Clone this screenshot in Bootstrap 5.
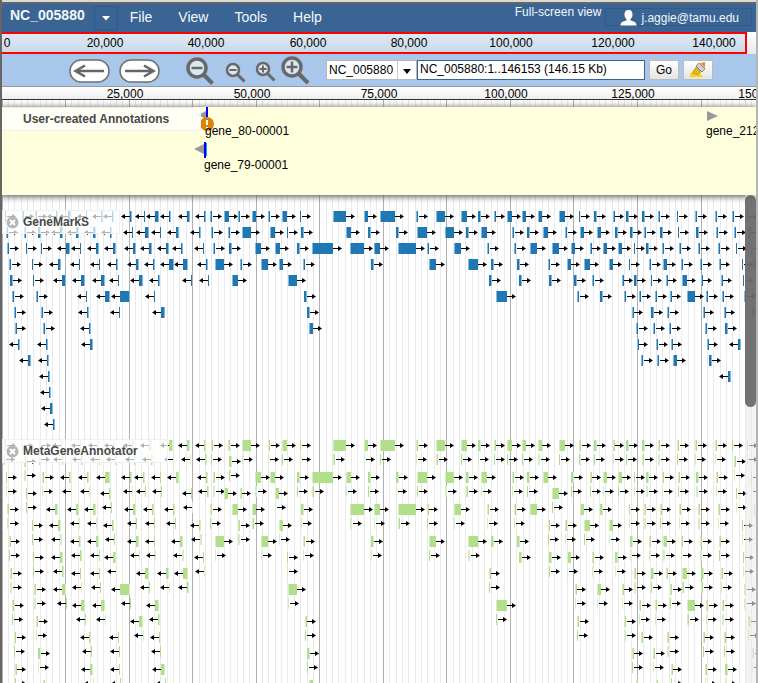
<!DOCTYPE html>
<html lang="en">
<head>
<meta charset="utf-8">
<meta name="viewport" content="width=device-width, initial-scale=1">
<title>NC_005880 genome browser</title>
<link rel="stylesheet" href="https://cdn.jsdelivr.net/npm/bootstrap@5.3.0/dist/css/bootstrap.min.css">
<style>
body{font-family:"Liberation Sans",Arial,sans-serif;font-size:12px;line-height:16px;color:#000;background:#fff}
.app{border-left:2px solid #666;border-right:2px solid #b4b4b4}
.topline{height:4px;background:linear-gradient(#d5dbd9 0 2px,#666 2px 4px)}
.menubar{height:28px;background:#396494;color:#fff}
.menubar .btn{border-radius:0;font-size:14px;line-height:18px;color:#f4f8fc;padding:4px 0;border:0}
.menubar .dataset{font-weight:bold;padding:2px 8px 4px}
.menubar .caret{width:24px;height:24px;border:1px solid #33598a;margin:2px 12px 0 1px}
.menus{gap:26px}
.fullscreen{color:#f4f8fc;text-decoration:none;line-height:16px}
.menubar .user{font-size:12px;line-height:16px;padding:1px 12px 0 14px;border:1px solid #33598a;height:18px}
.overview{height:22px;background:linear-gradient(#fff,#e8e8e8)}
.window{height:22px;border:2px solid #f00;border-left:0;background:linear-gradient(#dfeaf5,#cbd9e8);margin-right:9px}
.toolbar{height:32px;background:#a9c6eb;padding-left:67px}
.toolbar .ico{padding:0;border:0;background:none;display:block;line-height:0}
.toolbar .field{height:20px;font-size:12px;line-height:16px;border:1px solid #b8b8b8;border-radius:0;background:#fff;color:#000}
.combo{margin-left:13px}
.combo select{width:91px;padding:0 2px;appearance:none;background:#fff}
.combo svg{position:absolute;right:0;top:0;pointer-events:none}
.toolbar input.field{width:228px;border-color:#396494;padding:0 2px 3px}
.toolbar .tool{height:20px;width:30px;border:1px solid #bbb;border-radius:0;background:linear-gradient(#fff,#e4e4e4);padding:0;font-size:12px;line-height:16px;color:#000}
.scale{height:14px;background:linear-gradient(#fff,#eee);border-top:1px solid #999;border-bottom:1px solid #333}
.pinned{margin-top:7px;height:88px;background:#ffffdd;box-shadow:0 1px 6px 1px #666}
.tlabel{position:absolute;left:0;font-weight:bold;color:#484848;background:rgba(255,255,255,.7);border:1px solid #f0f0f0;border-left:0;height:24px;padding:0 4px;line-height:16px}
.tlabel.own{top:0;width:199px;padding-left:21px}
.tlabel.marks{top:15px;width:118px}
.tlabel.meta{top:14px;width:166px}
.tracks svg,.pinned>svg,.scale svg,.window svg{display:block;overflow:visible}
.track{position:relative}
.scroller{position:absolute;top:95px;right:0;width:11px;bottom:0;background:rgba(235,235,235,.6)}
.thumb{height:212px;border-radius:6px;background:rgba(94,94,94,.87)}
</style>
<script src="https://cdn.jsdelivr.net/npm/bootstrap@5.3.0/dist/js/bootstrap.bundle.min.js"></script>
</head>
<body>
<div class="app vh-100 d-flex flex-column overflow-hidden">
  <div class="topline flex-shrink-0"></div>
  <nav class="menubar d-flex align-items-start flex-shrink-0" aria-label="Main">
    <button class="btn dataset">NC_005880</button>
    <button class="btn caret p-0 d-flex align-items-center justify-content-center" aria-label="Choose dataset"><svg width="8" height="5"><path d="M0 0h8L4 4.5z" fill="#fff"/></svg></button>
    <div class="menus d-flex">
      <button class="btn">File</button><button class="btn">View</button><button class="btn">Tools</button><button class="btn">Help</button>
    </div>
    <a class="fullscreen ms-auto me-1" href="#">Full-screen view</a>
    <button class="btn user d-flex align-items-center mt-1 me-1"><svg width="17" height="16" class="me-1"><path d="M8.500 0c-3 0-4 2-4 4.500 0 2 .7 3.500 2 4.500v1.500C3 11.500.5 12 .5 15.500h16c0-3.500-2.500-4-6-5V9c1.300-1 2-2.500 2-4.500C12.500 2 11.500 0 8.500 0z" fill="#fff"/></svg>j.aggie@tamu.edu</button>
  </nav>
  <div class="overview flex-shrink-0"><div class="window"><svg id="overview" width="100%" height="18"></svg></div></div>
  <div class="toolbar d-flex align-items-center flex-shrink-0">
    <button class="ico me-2" aria-label="Pan left"><svg width="42" height="26"><rect x="1" y="3" width="39" height="22" rx="11" fill="#fff" stroke="#707070" stroke-width="1.500"/><path d="M35 14H7M16 8.500L6.500 14L16 19.500" fill="none" stroke="#666" stroke-width="2.500"/></svg></button>
    <button class="ico" aria-label="Pan right"><svg width="42" height="26"><rect x="1" y="3" width="39" height="22" rx="11" fill="#fff" stroke="#707070" stroke-width="1.500"/><path d="M6 14h28M25 8.500l9.500 5.500L25 19.500" fill="none" stroke="#666" stroke-width="2.500"/></svg></button>
    <button class="ico ms-4" aria-label="Zoom out fully"><svg width="32" height="32"><circle cx="12" cy="14" r="9" fill="#dce7f6" stroke="#686868" stroke-width="3.500"/><path d="M6.500 14h11" stroke="#686868" stroke-width="2.500"/><path d="M19 21l8.500 8.500" stroke="#686868" stroke-width="4"/></svg></button>
    <button class="ico ms-2" aria-label="Zoom out"><svg width="22" height="32"><circle cx="8" cy="16" r="6" fill="#dce7f6" stroke="#686868" stroke-width="2.500"/><path d="M4.500 16h7" stroke="#686868" stroke-width="2"/><path d="M12 20l7.500 7.500" stroke="#686868" stroke-width="3"/></svg></button>
    <button class="ico ms-2" aria-label="Zoom in"><svg width="22" height="32"><circle cx="8" cy="15" r="6" fill="#dce7f6" stroke="#686868" stroke-width="2.500"/><path d="M4.500 15h7M8 11.500v7" stroke="#686868" stroke-width="2"/><path d="M12 19l7.500 7.500" stroke="#686868" stroke-width="3"/></svg></button>
    <button class="ico ms-1" aria-label="Zoom in fully"><svg width="32" height="32"><circle cx="11" cy="13" r="9" fill="#dce7f6" stroke="#686868" stroke-width="3.500"/><path d="M5.500 13h11M11 7.500v11" stroke="#686868" stroke-width="2.500"/><path d="M18 20l9 9" stroke="#686868" stroke-width="4"/></svg></button>
    <div class="combo position-relative"><select class="field" aria-label="Reference sequence"><option>NC_005880</option></select><svg width="20" height="20"><path d="M.5 1v18" stroke="#ccc"/><path d="M6 9h8l-4 5z"/></svg></div>
    <input class="field me-1" aria-label="Location" value="NC_005880:1..146153 (146.15 Kb)">
    <button class="tool">Go</button>
    <button class="tool ms-1 d-flex align-items-center justify-content-center" aria-label="Highlight region"><svg width="18" height="18"><path d="M1 12l9 0 4 3-1 1H1z" fill="#f2d719"/><path d="M3 12l4-6 5 5-3 3z" fill="#e3b71b" stroke="#b88d16" stroke-width=".6"/><path d="M7 5l3-3 6 6-3 3z" fill="#d0d0d0" stroke="#888"/><path d="M11 2l5-1v6z" fill="#f18a32"/></svg></button>
  </div>
  <div class="scale flex-shrink-0"><svg id="scale" width="100%" height="12"></svg></div>
  <main class="position-relative flex-grow-1 overflow-hidden">
    <svg id="grid" class="position-absolute top-0 start-0" width="100%" height="100%"></svg>
    <section class="pinned position-relative">
      <svg width="100%" height="88">
        <path d="M204 4v8l-8-4z" fill="#999"/><rect x="204" width="2" height="10" fill="#00f"/>
        <circle cx="205" cy="17" r="7" fill="#d9820c"/><rect x="204" y="13" width="2" height="5" fill="#fff"/><rect x="204" y="20" width="2" height="2" fill="#fff"/>
        <text x="203" y="28">gene_80-00001</text>
        <path d="M202 37v10l-10-5z" fill="#999"/><rect x="202" y="35" width="2" height="16" fill="#00f"/><rect x="204" y="36" width="1" height="13" fill="#1e90ff"/>
        <text x="202" y="62">gene_79-00001</text>
        <path d="M705 4v10l11-5z" fill="#999"/>
        <text x="704" y="28">gene_212-00001</text>
      </svg>
      <div class="tlabel own d-flex align-items-center">User-created Annotations</div>
    </section>
    <div class="tracks position-relative">
      <section class="track"><svg id="marks" width="100%" height="230"></svg>
        <div class="tlabel marks d-flex align-items-center"><svg class="me-1" width="13" height="13"><circle cx="6.500" cy="6.500" r="6" fill="#b5b5b5"/><path d="M4 4l5 5M9 4l-5 5" stroke="#fff" stroke-width="2"/></svg>GeneMarkS</div></section>
      <section class="track"><svg id="meta" width="100%" height="270"></svg>
        <div class="tlabel meta d-flex align-items-center"><svg class="me-1" width="13" height="13"><circle cx="6.500" cy="6.500" r="6" fill="#b5b5b5"/><path d="M4 4l5 5M9 4l-5 5" stroke="#fff" stroke-width="2"/></svg>MetaGeneAnnotator</div></section>
    </div>
    <div class="scroller"><div class="thumb"></div></div>
  </main>
</div>
<script>
// Features are stored per block: direction, start and width in thirds of a pixel.
const origins = [-2, 251, 503];
const geneMarkS = [
[`r14:4 r66:6 r104:6 l168:5 l205:8 l257:5 l304:6 l336:5 l390:6 l431:4 l466:11 l507:5 l562:9 l613:5 r631:5 r673:13 r714:5`,
`r19:4 r73:6 r115:8 l181:7 l229:8 l280:8 l330:5 l397:3 l434:13 l479:4 l527:11 l598:4 r634:6 r685:5 r726:28`,
`r22:6 r77:5 r122:5 l199:10 l239:5 l288:9 l340:7 l398:10 l446:11 l498:10 l543:6 l609:3 r640:6 r687:9`,
`r27:6 r95:5 l174:8 l237:4 l296:5 l349:5 l407:11 l459:5 l508:13 l550:14 l618:5 r645:28 r720:6`,
`r31:8 r98:5 l187:12 l243:13 l302:14 l353:4 l416:14 l475:5 l572:4 l624:4 r696:19`,
`r36:6 r109:5 l258:4 l315:15 l360:31 l462:4`,
`r42:6 r124:6 l261:7 l357:4 l483:13`,
`r45:7 r129:6 l267:6`,`l54:7 l138:5 l270:10`,`l84:10 l141:5`,`l144:6`,`l147:6`,`l150:10`,`l159:7`],
[`r-2:12 r45:6 r87:16 r141:4 r241:39 r333:12 r381:45 r489:5 r550:27 r624:18 r675:10 r723:7`,
`r51:15 r102:4 r144:9 r279:15 r345:9 r429:8 r492:31 r577:26 r640:7 r684:18`,
`r7:16 r65:15 r132:9 r178:63 r292:40 r363:18 r436:53 r522:6 r602:22 r702:6`,
`r24:22 r78:12 r150:5 r353:10 r528:21 r646:30 r714:9`,
`r105:27 r708:8`,`r154:8`,`r161:9`,`r168:11`],
[`r6:15 r50:13 r100:12 r162:19 r222:4 r267:9 r323:8 r363:9 r412:7 r460:6 r516:4 r570:5 r630:5 r680:6 r726:4`,
`r21:6 r66:9 r114:16 r180:6 r225:13 r276:12 r330:8 r375:9 r417:6 r465:8 r519:4 r573:9 r633:6 r687:6 r730:9`,
`r27:6 r75:22 r141:21 r198:12 r255:7 r294:12 r339:12 r387:4 r424:9 r471:6 r522:6 r579:6 r639:6 r693:4 r738:4`,
`r35:11 r129:5 r186:12 r237:19 r312:12 r372:4 r432:6 r475:10 r528:6 r585:6 r642:7 r711:4 r745:5`,
`r43:7 r132:9 r207:10 r261:6 r350:8 r388:7 r437:5 r483:7 r532:15 r588:7 r648:7 r714:4`,
`r-27:33 r216:5 r285:9 r357:6 r402:6 r450:6 r495:7 r547:23 r603:6 r652:6 r717:5`,
`r381:7 r438:9 r487:5 r594:7 r657:7 r740:6`,
`r393:6 r444:6 r492:5 r600:6 r660:9`,
`r396:7 r453:6 r498:7 r606:7 l700:9`,
`r408:5 r456:6 r504:12 r612:9`,`l669:8`]];
// Lower case: the gene is followed by its thin stop subfeature 14px below.
const metaGene = [
[`r12:5 R66:4 r117:5 l182:5 l240:5 l292:5 l340:5 l397:5 l448:7 l507:12 l562:8 l612:5 r633:5 R684:6 r726:26`,
`r73:4 r687:9`,
`r18:4 r125:6 l207:6 l261:6 L315:15 l390:6 l430:5 l479:5 L527:10 l618:5 r640:6`,
`r77:5 l328:5 l572:4 R673:12 R720:7`,
`r22:6 L166:8 l229:8 l280:8 l399:9 l455:7 l520:5 r630:5 R696:18`,
`r95:5 l174:8 l337:5 l598:4 r715:6`,
`r27:7 l237:5 l288:9 l407:10 l461:4 l540:8 r645:28`,
`r98:5 l181:7 l340:8 l609:4`,
`r31:6 l240:4 l296:5 l434:13 l497:10 l550:13`,
`r103:6 l187:11 l360:31`,
`r36:5 l243:13 l302:14 l465:11`,
`r108:6 l416:14`,
`r42:5 l268:5 l353:5 l476:5`,
`r114:8`,
`r45:7 l270:10 l356:5 l483:13`,
`r129:6`],
[`r45:6 r87:15 r141:4 r241:39 r333:12 r381:45 r489:6 r550:27 r624:17 r675:10 r723:7`,
``,
`r7:16 R51:15 r132:9 r178:63 r279:14 r345:9 r429:8 r492:31 r577:26 r640:7 r684:18`,
`r65:14`,
`r-2:11 r144:8 r292:40 r363:18 r436:53 r522:7 r602:22 r702:6`,
`r78:12`,
`r24:22 r150:6 r353:10 r528:21 r646:30 R714:9`,
`r102:4`,`r708:7`,`r105:28`,``,`r155:7`,``,`r161:9`,``,`r168:11`],
[`r6:15 r50:13 r100:12 r162:19 r222:5 r267:9 r323:8 r363:9 r412:7 r460:6 r516:5 r570:6 r630:6 R680:5 r726:4`,
`r687:6`,
`r21:6 r66:9 R114:15 r198:9 r255:7 r294:12 r339:11 r387:4 r424:8 r471:6 r519:5 r574:8 r633:6 r738:4`,
`r141:21 r693:4`,
`r27:6 R75:21 R225:12 R285:9 r372:4 r418:6 r465:7 r522:6 r580:6 r639:6 R746:4`,
`r129:5 r180:6 r237:19 r312:12 r711:4`,
`R35:11 r375:8 r432:6 r475:10 r528:6 r586:6 r642:7`,
`R43:7 r132:9 r186:12 r261:6 r330:8 r714:4`,
`r388:6 r438:9 R483:7 r532:15 r589:7 r648:6`,
`r209:8 r276:12 r350:8 r495:5 r718:6`,
`r-27:33 r402:6 r450:6 r547:23 r603:6 r652:6`,
`r216:5 r358:6 r729:9`,
`R408:5 r487:6 r594:7 r657:7`,
`r381:7 r444:6 r740:6`,
`r498:7 r600:6 r660:8`,
`r393:6 r453:6`]];
const rect = (x, y, w, h, f) => `<rect x="${x}" y="${y}" width="${w}" height="${h}" fill="${f}"/>`;
function glyph(dir, a, w, y, o, dark, pale) {
  const x0 = Math.round(a / 3) + o, x1 = Math.max(x0 + 1, Math.round((a + w) / 3) + o), n = x1 - x0;
  let s = '';
  if (n === 1) s = rect(x0, y - 6, 1, 11, dark);
  else if (dir === 'r' && n !== 3) s = rect(x0, y - 6, 1, 11, pale) + rect(x0 + 1, y - 6, n - 1, 11, dark);
  else s = rect(x0, y - 6, n - 1, 11, dark) + rect(x1 - 1, y - 6, 1, 11, pale);
  const t = w <= 6 ? x1 + 1 : x1;
  return s + (dir === 'r'
    ? `<path d="M${t} ${y - 1}h5v-2l4 2.500l-4 2.500v-2h-5z"/>`
    : `<path d="M${x0} ${y - 1}h-5v-2l-4 2.500l4 2.500v-2h5z"/>`);
}
function draw(id, data, top, dark, pale, paired) {
  let s = '';
  data.forEach((rows, b) => rows.forEach((row, n) => {
    for (const m of row.matchAll(/([rlRL])(-?\d+):(\d+)/g)) {
      const d = m[1].toLowerCase(), a = +m[2], w = +m[3], y = top + 16 * n;
      s += glyph(d, a, w, y, origins[b], dark, pale);
      if (paired && m[1] === d) s += glyph(d, d === 'r' ? a : a + w - 1, 4, y + 14, origins[b], w % 2 ? dark : pale, pale);
    }
  }));
  document.getElementById(id).innerHTML = s;
}
draw('marks', geneMarkS, 22, '#1f78b4', '#86b8da', false);
draw('meta', metaGene, 21, '#b2df8a', '#d6edc2', true);
let g = '';
for (let i = 0; i < 400; i++) g += rect(Math.floor(i * 6.355), 0, 1, '100%', i % 10 ? '#e9e9e9' : '#b0b0b0');
document.getElementById('grid').innerHTML = g;
const labels = (id, step, px, shift, y) => {
  let s = '';
  for (let i = 0; i < 8; i++) if (i * step < 150001 && (id === 'scale' || i * step < 146153))
    s += `<text x="${Math.round(i * px + (i || id === 'scale' ? shift : 5))}" y="${y}" text-anchor="middle">${(i * step).toLocaleString('en-US')}</text>`;
  document.getElementById(id).innerHTML = s;
};
labels('overview', 20000, 101.6, 1, 13);
labels('scale', 25000, 127, -4, 11);
</script>
</body>
</html>
